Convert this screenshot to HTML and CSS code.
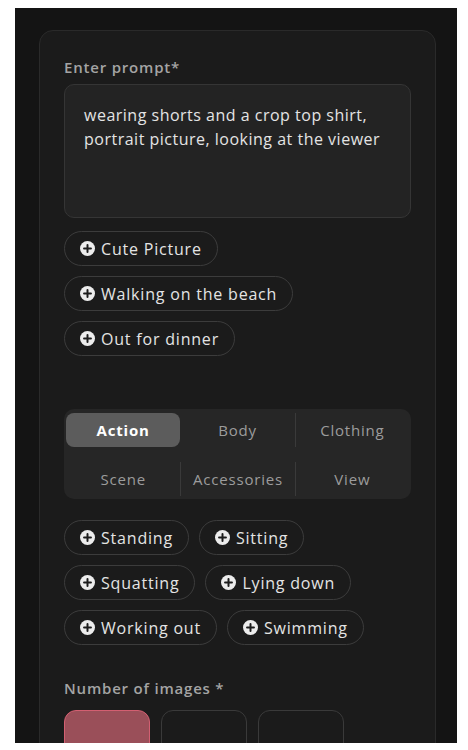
FILE: index.html
```html
<!DOCTYPE html>
<html lang="en">
<head>
<meta charset="utf-8">
<title>Prompt</title>
<link rel="stylesheet" href="styles.css">
</head>
<body>
<div class="page">
  <div class="frame">
    <div class="card">
      <div class="label">Enter prompt*</div>
      <div class="textarea">wearing shorts and a crop top shirt, portrait picture, looking at the viewer</div>

      <div class="chips-col">
        <div class="chip"><svg class="plus" viewBox="0 0 16 16"><circle cx="8" cy="8" r="8" fill="#ececec"/><path d="M8 4.3v7.4M4.3 8h7.4" stroke="#1c1c1c" stroke-width="2.1" stroke-linecap="round"/></svg><span>Cute Picture</span></div>
        <div class="chip"><svg class="plus" viewBox="0 0 16 16"><circle cx="8" cy="8" r="8" fill="#ececec"/><path d="M8 4.3v7.4M4.3 8h7.4" stroke="#1c1c1c" stroke-width="2.1" stroke-linecap="round"/></svg><span>Walking on the beach</span></div>
        <div class="chip"><svg class="plus" viewBox="0 0 16 16"><circle cx="8" cy="8" r="8" fill="#ececec"/><path d="M8 4.3v7.4M4.3 8h7.4" stroke="#1c1c1c" stroke-width="2.1" stroke-linecap="round"/></svg><span>Out for dinner</span></div>
      </div>

      <div class="tabs">
        <div class="tab active">Action</div>
        <div class="tab">Body</div>
        <div class="tab div">Clothing</div>
        <div class="tab">Scene</div>
        <div class="tab div">Accessories</div>
        <div class="tab div">View</div>
      </div>

      <div class="chips-rows">
        <div class="row">
          <div class="chip"><svg class="plus" viewBox="0 0 16 16"><circle cx="8" cy="8" r="8" fill="#ececec"/><path d="M8 4.3v7.4M4.3 8h7.4" stroke="#1c1c1c" stroke-width="2.1" stroke-linecap="round"/></svg><span>Standing</span></div>
          <div class="chip"><svg class="plus" viewBox="0 0 16 16"><circle cx="8" cy="8" r="8" fill="#ececec"/><path d="M8 4.3v7.4M4.3 8h7.4" stroke="#1c1c1c" stroke-width="2.1" stroke-linecap="round"/></svg><span>Sitting</span></div>
        </div>
        <div class="row">
          <div class="chip"><svg class="plus" viewBox="0 0 16 16"><circle cx="8" cy="8" r="8" fill="#ececec"/><path d="M8 4.3v7.4M4.3 8h7.4" stroke="#1c1c1c" stroke-width="2.1" stroke-linecap="round"/></svg><span>Squatting</span></div>
          <div class="chip"><svg class="plus" viewBox="0 0 16 16"><circle cx="8" cy="8" r="8" fill="#ececec"/><path d="M8 4.3v7.4M4.3 8h7.4" stroke="#1c1c1c" stroke-width="2.1" stroke-linecap="round"/></svg><span>Lying down</span></div>
        </div>
        <div class="row">
          <div class="chip"><svg class="plus" viewBox="0 0 16 16"><circle cx="8" cy="8" r="8" fill="#ececec"/><path d="M8 4.3v7.4M4.3 8h7.4" stroke="#1c1c1c" stroke-width="2.1" stroke-linecap="round"/></svg><span>Working out</span></div>
          <div class="chip"><svg class="plus" viewBox="0 0 16 16"><circle cx="8" cy="8" r="8" fill="#ececec"/><path d="M8 4.3v7.4M4.3 8h7.4" stroke="#1c1c1c" stroke-width="2.1" stroke-linecap="round"/></svg><span>Swimming</span></div>
        </div>
      </div>

      <div class="label label-num">Number of images *</div>
      <div class="boxes">
        <div class="box selected"></div>
        <div class="box"></div>
        <div class="box"></div>
      </div>
    </div>
  </div>
</div>
</body>
</html>
```

FILE: styles.css
```css
* { box-sizing: border-box; }

html, body {
  margin: 0;
  background: #ffffff;
}

body {
  font-family: "Open Sans", "Noto Sans", "DejaVu Sans", sans-serif;
  letter-spacing: 0.8px;
}

.page {
  padding: 8px 11px 0 15px;
}

.frame {
  background: #141414;
  height: 735px;
  overflow: hidden;
  padding: 22px 21px 0 24px;
}

.card {
  background: #1b1b1b;
  border: 1px solid #2a2a2a;
  border-radius: 14px;
  padding: 26px 24px 40px 24px;
  min-height: 800px;
}

.label {
  font-size: 15px;
  font-weight: 600;
  line-height: 20px;
  color: #a4a4a4;
  margin-bottom: 7px;
}

.textarea {
  height: 134px;
  background: #232323;
  border: 1px solid #353535;
  border-radius: 10px;
  padding: 18px 16px 18px 19px;
  font-size: 16px;
  line-height: 24px;
  letter-spacing: 0.5px;
  color: #e4e4e4;
}

.chips-col {
  margin-top: 13px;
  display: flex;
  flex-direction: column;
  align-items: flex-start;
  gap: 10px;
}

.chip {
  display: inline-flex;
  align-items: center;
  gap: 6px;
  height: 35px;
  padding: 0 15px;
  border: 1px solid #3c3c3c;
  border-radius: 18px;
  font-size: 16px;
  color: #e4e4e4;
  white-space: nowrap;
}

.plus {
  width: 15px;
  height: 15px;
  flex: none;
}

.tabs {
  margin-top: 53px;
  background: #262626;
  border-radius: 10px;
  padding: 4px 2px 3px 2px;
  display: grid;
  grid-template-columns: repeat(3, 1fr);
  row-gap: 15px;
}

.tab {
  height: 34px;
  display: flex;
  align-items: center;
  justify-content: center;
  font-size: 15px;
  color: #9c9c9c;
}

.tab.div {
  border-left: 1px solid #3a3a3a;
}

.tab.active {
  background: #5c5c5c;
  border-radius: 8px;
  color: #ffffff;
  font-weight: 700;
}

.chips-rows {
  margin-top: 21px;
  display: flex;
  flex-direction: column;
  gap: 10px;
}

.row {
  display: flex;
  gap: 10px;
}

.label-num {
  margin-top: 33px;
  margin-bottom: 12px;
}

.boxes {
  display: flex;
  gap: 11px;
}

.box {
  width: 86px;
  height: 86px;
  border: 1.5px solid #3a3a3a;
  border-radius: 12px;
}

.box.selected {
  background: #9a4f59;
  border-color: #d35f71;
}
```
